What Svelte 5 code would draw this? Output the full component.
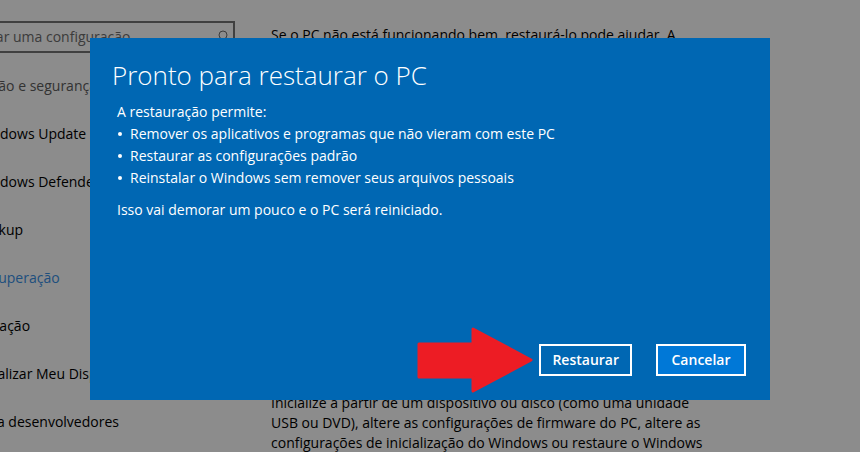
<script lang="ts">
    interface NavItem {
        label: string;
        active?: boolean;
    }

    const navItems: NavItem[] = [
        { label: "Windows Update" },
        { label: "Windows Defender" },
        { label: "Backup" },
        { label: "Recuperação", active: true },
        { label: "Ativação" },
        { label: "Localizar Meu Dispositivo" },
        { label: "Para desenvolvedores" },
    ];

    const effects = [
        "Remover os aplicativos e programas que não vieram com este PC",
        "Restaurar as configurações padrão",
        "Reinstalar o Windows sem remover seus arquivos pessoais",
    ];
</script>

<div class="settings">
    <aside class="sidebar">
        <label class="search">
            <input type="text" placeholder="Localizar uma configuração" aria-label="Localizar uma configuração" />
            <svg width="14" height="14" viewBox="0 0 14 14" aria-hidden="true">
                <circle cx="8" cy="5" r="4" />
                <path d="M5 8 L1 13" />
            </svg>
        </label>
        <h2>Atualização e segurança</h2>
        <nav>
            {#each navItems as item}
                <a href="#settings" class:active={item.active}>{item.label}</a>
            {/each}
        </nav>
    </aside>

    <main class="content">
        <p>Se o PC não está funcionando bem, restaurá-lo pode ajudar. A</p>
        <p>
            Inicialize a partir de um dispositivo ou disco (como uma unidade
            USB ou DVD), altere as configurações de firmware do PC, altere as
            configurações de inicialização do Windows ou restaure o Windows
        </p>
    </main>
</div>

<div class="backdrop">
    <div class="dialog" role="dialog" aria-modal="true" aria-labelledby="dialog-title">
        <h1 id="dialog-title">Pronto para restaurar o PC</h1>
        <div class="message">
            <p>A restauração permite:</p>
            <ul>
                {#each effects as effect}
                    <li>{effect}</li>
                {/each}
            </ul>
            <p class="note">Isso vai demorar um pouco e o PC será reiniciado.</p>
        </div>
        <div class="actions">
            <svg class="arrow" width="116" height="66" viewBox="0 0 116 66" aria-hidden="true">
                <path d="M2 17 H56 V2 L114 33 L56 64 V50 H2 Z" />
            </svg>
            <button type="button">Restaurar</button>
            <button type="button" class="cancel">Cancelar</button>
        </div>
    </div>
</div>

<style>
    :global(body) {
        background: #e9e9e9;
        overflow: hidden;
    }

    .settings,
    .backdrop {
        font-family: "Open Sans", "Noto Sans", sans-serif;
        font-size: 14px;
        line-height: 20px;
    }

    .settings {
        display: flex;
        gap: 36px;
        height: 100vh;
        margin-left: -60px;
        overflow: hidden;
        color: #000;
    }

    .sidebar {
        flex: 0 0 295px;
        padding-top: 21px;
    }

    .search {
        display: flex;
        align-items: center;
        box-sizing: border-box;
        height: 32px;
        padding: 0 4px 0 10px;
        border: 2px solid #6b6b6b;
    }

    .search input {
        flex: 1;
        min-width: 0;
        padding: 0;
        border: 0;
        background: none;
        font: inherit;
    }

    .search input::placeholder {
        color: #646464;
        opacity: 1;
    }

    .search svg {
        fill: none;
        stroke: #646464;
    }

    h2 {
        margin: 22px 0 13px;
        font-size: 14px;
        font-weight: 400;
        line-height: 22px;
        color: #555;
    }

    nav {
        display: flex;
        flex-direction: column;
    }

    nav a {
        padding-left: 35px;
        line-height: 48px;
        white-space: nowrap;
        color: inherit;
        text-decoration: none;
    }

    nav a.active {
        color: #3484d2;
    }

    .content {
        display: flex;
        flex: 0 1 446px;
        flex-direction: column;
        gap: 348px;
        padding-top: 25px;
    }

    .content p {
        margin: 0;
    }

    .backdrop {
        position: fixed;
        inset: 0;
        display: flex;
        justify-content: center;
        align-items: flex-start;
        padding-top: 38px;
        background: rgba(0, 0, 0, 0.4);
    }

    .dialog {
        display: flex;
        flex-direction: column;
        box-sizing: border-box;
        width: 100%;
        max-width: 680px;
        min-height: 362px;
        padding: 19px 24px 7px 22px;
        background: #0067b3;
        color: #fff;
    }

    h1 {
        margin: 0 0 8px;
        font-size: 26px;
        font-weight: 300;
        line-height: 36px;
    }

    .message {
        flex: 1;
        padding-left: 5px;
        line-height: 22px;
    }

    .message p,
    .message ul {
        margin: 0;
    }

    .message ul {
        padding: 0;
        list-style: none;
    }

    .message li {
        display: flex;
        align-items: center;
        gap: 8px;
    }

    .message li::before {
        content: "";
        width: 4px;
        height: 4px;
        margin-left: 1px;
        border-radius: 50%;
        background: #fff;
    }

    .message .note {
        margin-top: 10px;
    }

    .actions {
        display: flex;
        justify-content: flex-end;
        align-items: center;
    }

    .arrow {
        margin-right: 6px;
        fill: #ed1c24;
        stroke: #ed1c24;
        stroke-width: 3;
        stroke-linejoin: round;
    }

    button {
        min-width: 90px;
        height: 32px;
        padding: 0 11px;
        border: 2px solid #fff;
        background: #0067b3;
        color: inherit;
        font: inherit;
        font-weight: 600;
    }

    button.cancel {
        margin-left: 24px;
        background: #0078d7;
    }
</style>
